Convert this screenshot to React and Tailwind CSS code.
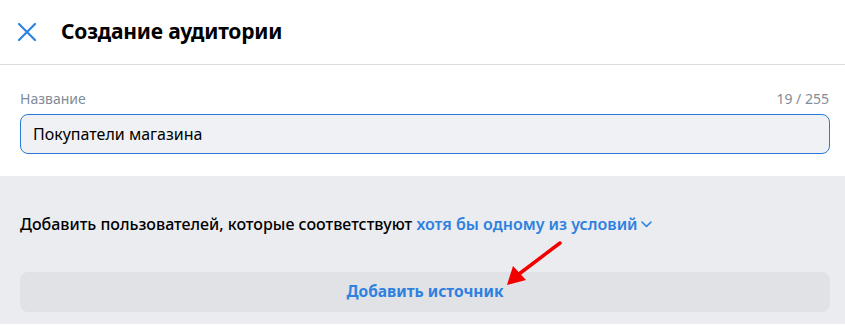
import React from 'react';

export default function App() {
  return (
    <div className="w-[845px] h-[325px] bg-white overflow-hidden relative" style={{ fontFamily: '"Noto Sans", "Open Sans", sans-serif' }}>
      <header className="h-[65px] flex items-center border-b border-[#dcdcdc]">
        <div className="w-[61px] flex pl-[17px]">
          <svg width="20" height="20" viewBox="0 0 20 20" className="text-[#2d81e0]">
            <path d="M2 2 L18 18 M18 2 L2 18" stroke="currentColor" strokeWidth="2.2" strokeLinecap="round" />
          </svg>
        </div>
        <h1 className="text-[21px] font-bold text-black tracking-[-0.2px]">Создание аудитории</h1>
      </header>

      <section className="pl-5 pr-[15px] pt-[24px] pb-[22px]">
        <div className="flex justify-between text-[14px] text-[#818c99] leading-5 mb-[5px] pr-[1px]">
          <span>Название</span>
          <span>19 / 255</span>
        </div>
        <div className="h-[40px] rounded-lg border border-[#2a7ad8] bg-[#f0f1f4] flex items-center px-3 text-[16px] text-black">
          Покупатели магазина
        </div>
      </section>

      <section className="bg-[#ebecf0] pl-5 pr-[15px] pt-[36px] h-[148px]">
        <p className="text-[16px] text-black font-medium leading-6 flex items-center">
          Добавить пользователей, которые соответствуют&nbsp;
          <span className="text-[#2d81e0] font-semibold flex items-center gap-[3px]">
            хотя бы одному из условий
            <svg width="11" height="7" viewBox="0 0 11 7">
              <path d="M1 1 L5.5 5.5 L10 1" fill="none" stroke="currentColor" strokeWidth="1.6" strokeLinecap="round" strokeLinejoin="round" />
            </svg>
          </span>
        </p>
        <button className="mt-[36px] w-full h-[40px] rounded-lg bg-[#e1e2e6] text-[#2d81e0] text-[15.5px] font-bold">
          Добавить источник
        </button>
      </section>

      <svg className="absolute left-0 top-0 pointer-events-none" width="845" height="325">
        <line x1="560" y1="243" x2="519" y2="274" stroke="#f20000" strokeWidth="3.5" strokeLinecap="round" />
        <polygon points="507,285 513,266 526,280" fill="#f20000" />
      </svg>
    </div>
  );
}
